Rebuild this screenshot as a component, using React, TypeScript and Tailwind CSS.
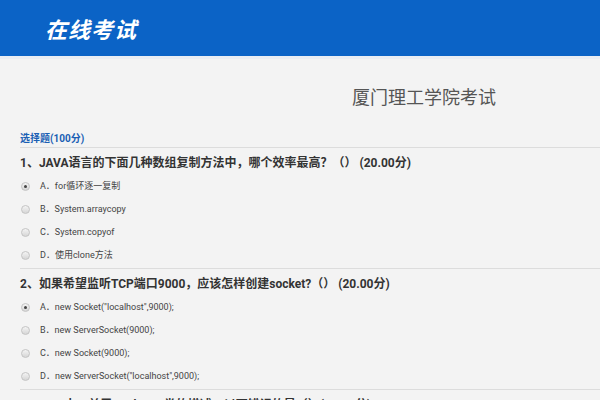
import React from 'react';

const questions = [
  {
    title: '1、JAVA语言的下面几种数组复制方法中，哪个效率最高？（） (20.00分)',
    options: ['A．for循环逐一复制', 'B．System.arraycopy', 'C．System.copyof', 'D．使用clone方法'],
    checked: 0,
  },
  {
    title: '2、如果希望监听TCP端口9000，应该怎样创建socket?（） (20.00分)',
    options: [
      'A．new Socket("localhost",9000);',
      'B．new ServerSocket(9000);',
      'C．new Socket(9000);',
      'D．new ServerSocket("localhost",9000);',
    ],
    checked: 0,
  },
  {
    title: '3、Java中，关于HashMap类的描述，以下错误的是（）(20.00分)',
    options: ['A．HashMap使用键/值得形式保存数据', 'B．HashMap 能够保证其中元素的顺序'],
    checked: -1,
  },
];

function Radio({ on }: { on: boolean }) {
  return (
    <span className="w-[9px] h-[9px] rounded-full border border-[#c4c4c4] bg-gradient-to-b from-[#f4f4f4] to-[#d6d6d6] flex items-center justify-center shrink-0">
      {on && <span className="w-[3px] h-[3px] rounded-full bg-[#444]" />}
    </span>
  );
}

export default function App() {
  return (
    <div
      className="w-[600px] h-[400px] overflow-hidden bg-[#f3f3f3]"
      style={{ fontFamily: 'Roboto, "Liberation Sans", "Noto Sans CJK SC", sans-serif' }}
    >
      {/* 顶部蓝条 */}
      <div className="h-[56px] bg-[#0b63c6] flex items-center pl-[45px]">
        <span
          className="text-white text-[22px] font-bold italic tracking-[1px]"
          style={{ fontFamily: '"Noto Sans CJK SC", sans-serif' }}
        >
          在线考试
        </span>
      </div>
      <div className="h-[3px] bg-[#e9edf3]" />

      {/* 考试名称 */}
      <div className="h-[73px] pl-[352px] pt-[26px]">
        <span
          className="text-[18px] text-[#555] leading-[22px]"
          style={{ fontFamily: '"Noto Sans CJK SC", sans-serif' }}
        >
          厦门理工学院考试
        </span>
      </div>

      <div className="ml-5">
        <div className="border-b border-[#dcdcdc] h-[16px] text-[10px] font-bold text-[#1a5fb4] leading-[14px]">
          选择题(100分)
        </div>

        {questions.map((q, i) => (
          <div key={i} className="border-b border-[#dcdcdc] pt-[5px] pb-[1px]">
            <div className="h-[21px] text-[12px] font-bold text-[#333] leading-[21px] whitespace-nowrap">
              {q.title}
            </div>
            <div className="mt-[1px]">
              {q.options.map((o, j) => (
                <div key={j} className="h-[23px] flex items-center pl-[1px] gap-[10px] text-[9px] text-[#444]">
                  <Radio on={q.checked === j} />
                  <span className="whitespace-nowrap">{o}</span>
                </div>
              ))}
            </div>
          </div>
        ))}
      </div>
    </div>
  );
}
